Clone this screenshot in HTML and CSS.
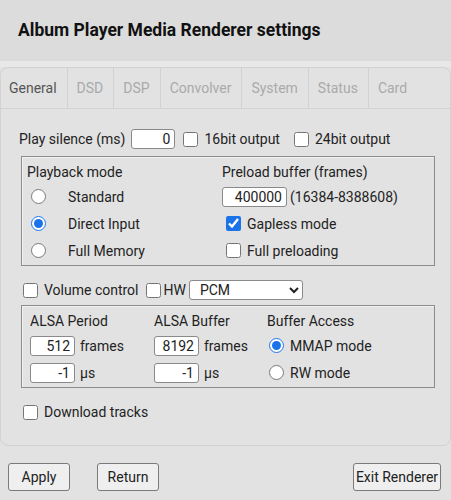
FILE: index.html
```html
<!DOCTYPE html>
<html lang="en">
<head>
  <meta charset="UTF-8" />
  <meta name="viewport" content="width=device-width, initial-scale=1.0"/>
  <title>Album Player Media Renderer settings</title>
  <link rel="stylesheet" href="styles.css">
</head>
<body>

  <div class="header">
    <h1>Album Player Media Renderer settings</h1>
  </div>

  <div class="panel">
    <div class="tabs">
      <div class="tab active">General</div>
      <div class="tab">DSD</div>
      <div class="tab">DSP</div>
      <div class="tab">Convolver</div>
      <div class="tab">System</div>
      <div class="tab">Status</div>
      <div class="tab last">Card</div>
    </div>

    <div class="content">
      <div class="row">
        <span>Play silence (ms)</span>
        <input class="num silence" type="text" value="0">
        <input class="check" type="checkbox">
        <span class="after-check">16bit output</span>
        <input class="check gap" type="checkbox">
        <span class="after-check">24bit output</span>
      </div>

      <div class="box playback">
        <div class="cell title-left">Playback mode</div>
        <div class="cell">Preload buffer (frames)</div>

        <div class="cell"><input class="radio" type="radio" name="mode"><span class="radio-label">Standard</span></div>
        <div class="cell"><input class="num preload" type="text" value="400000"><span class="hint">(16384-8388608)</span></div>

        <div class="cell"><input class="radio" type="radio" name="mode" checked><span class="radio-label">Direct Input</span></div>
        <div class="cell"><input class="check" type="checkbox" checked><span class="after-check">Gapless mode</span></div>

        <div class="cell"><input class="radio" type="radio" name="mode"><span class="radio-label">Full Memory</span></div>
        <div class="cell"><input class="check" type="checkbox"><span class="after-check">Full preloading</span></div>
      </div>

      <div class="row volume">
        <input class="check" type="checkbox">
        <span class="after-check">Volume control</span>
        <input class="check hw" type="checkbox">
        <span class="hw-label">HW</span>
        <select class="mixer">
          <option>PCM</option>
        </select>
      </div>

      <div class="box alsa">
        <div class="cell">ALSA Period</div>
        <div class="cell">ALSA Buffer</div>
        <div class="cell">Buffer Access</div>

        <div class="cell"><input class="num small" type="text" value="512"><span class="unit">frames</span></div>
        <div class="cell"><input class="num small" type="text" value="8192"><span class="unit">frames</span></div>
        <div class="cell"><input class="radio access" type="radio" name="access" checked><span class="after-check">MMAP mode</span></div>

        <div class="cell"><input class="num small" type="text" value="-1"><span class="unit">µs</span></div>
        <div class="cell"><input class="num small" type="text" value="-1"><span class="unit">µs</span></div>
        <div class="cell"><input class="radio access" type="radio" name="access"><span class="after-check">RW mode</span></div>
      </div>

      <div class="row download">
        <input class="check" type="checkbox">
        <span class="after-check">Download tracks</span>
      </div>
    </div>
  </div>

  <div class="buttons">
    <button class="btn apply">Apply</button>
    <button class="btn return">Return</button>
    <button class="btn exit">Exit Renderer</button>
  </div>

</body>
</html>
```

FILE: styles.css
```css
* {
  box-sizing: border-box;
  margin: 0;
  padding: 0;
}

body {
  background-color: #e2e2e2;
  font-family: Roboto, "Noto Sans", Arial, sans-serif;
  font-size: 14px;
  color: #222;
  width: 451px;
  height: 500px;
  overflow: hidden;
}

.header {
  background-color: #dcdcdc;
  height: 67px;
  padding: 19px 18px 0;
  border-bottom: 6px solid #e8e8e8;
}

h1 {
  font-size: 17.5px;
  font-weight: bold;
  color: #111;
  line-height: 22px;
}

.panel {
  background-color: #e2e2e2;
  border: 1px solid #d2d2d2;
  border-radius: 8px;
  height: 379px;
}

.tabs {
  display: flex;
  height: 41px;
  border-bottom: 1px solid #d2d2d2;
}

.tab {
  padding: 0 10px 0 9px;
  line-height: 40px;
  color: #aaa;
  border-right: 1px solid #d2d2d2;
}

.tab.active {
  color: #555;
  padding-left: 8px;
}

.tab.last {
  border-right: none;
}

.content {
  padding: 19px 15px 0 18px;
}

.row {
  display: flex;
  align-items: center;
  height: 22px;
}

.num {
  height: 20px;
  border: 1px solid #8a8a8a;
  border-radius: 3px;
  background: white;
  text-align: right;
  padding: 0 4px;
  font-family: Roboto, "Noto Sans", Arial, sans-serif;
  font-size: 14px;
  color: #222;
}

.silence {
  width: 44px;
  margin-left: 6px;
}

.check {
  width: 15px;
  height: 15px;
  margin: 0 0 0 8px;
  accent-color: #1a73e8;
}

.check.gap {
  margin-left: 14px;
}

.after-check {
  margin-left: 6px;
}

.box {
  margin-left: 2px;
  border: 1px solid #8c8c8c;
  box-shadow: inset 1px 1px 0 #f2f2f2;
  display: grid;
}

.cell {
  display: flex;
  align-items: center;
}

.playback {
  margin-top: 6px;
  grid-template-columns: 200px 1fr;
  grid-template-rows: 22px 27px 27px 27px;
  padding: 4px 0 1px 0;
}

.title-left {
  padding-left: 5px;
}

.radio {
  width: 15px;
  height: 15px;
  margin: 0 0 0 9px;
  accent-color: #1a73e8;
}

.radio-label {
  margin-left: 22px;
}

.playback .check {
  margin-left: 4px;
}

.preload {
  width: 65px;
}

.hint {
  margin-left: 3px;
}

.volume {
  margin-top: 13px;
}

.volume .check {
  margin-left: 4px;
}

.check.hw {
  margin-left: 7px;
}

.hw-label {
  margin-left: 3px;
}

.mixer {
  margin-left: 3px;
  width: 114px;
  height: 20px;
  border: 1px solid #8a8a8a;
  border-radius: 3px;
  background: white;
  font-family: Roboto, "Noto Sans", Arial, sans-serif;
  font-size: 14px;
  color: #222;
  padding-left: 6px;
}

.alsa {
  margin-top: 4px;
  grid-template-columns: 124px 113px 1fr;
  grid-template-rows: 22px 27px 27px;
  padding: 4px 0 1px 8px;
}

.small {
  width: 45px;
}

.unit {
  margin-left: 5px;
}

.radio.access {
  margin-left: 2px;
}

.download {
  margin-top: 13px;
}

.download .check {
  margin-left: 4px;
}

.buttons {
  display: flex;
  padding: 17px 10px 0 8px;
}

.btn {
  height: 28px;
  border: 1px solid #7a7a7a;
  border-radius: 3px;
  background-color: #efefef;
  font-family: Roboto, "Noto Sans", Arial, sans-serif;
  font-size: 14px;
  color: #222;
}

.apply {
  width: 62px;
}

.return {
  width: 62px;
  margin-left: 27px;
}

.exit {
  width: 88px;
  margin-left: auto;
}
```
